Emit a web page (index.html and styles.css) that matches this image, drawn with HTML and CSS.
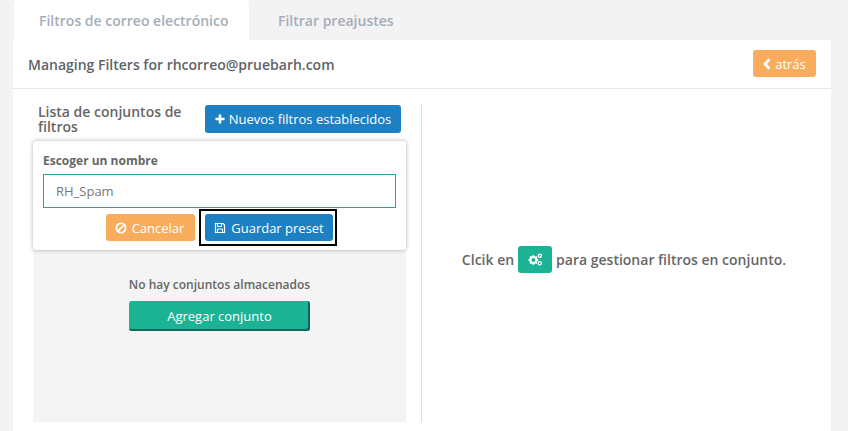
FILE: index.html
```html
<!DOCTYPE html>
<html lang="es">
<head>
<meta charset="utf-8">
<title>Filtros de correo electrónico</title>
<link rel="stylesheet" href="styles.css">
</head>
<body>
<nav class="tabs">
  <a class="tab tab-active">Filtros de correo electrónico</a>
  <a class="tab">Filtrar preajustes</a>
</nav>
<main class="panel">
  <header class="panel-head">
    <h1 class="panel-title">Managing Filters for rhcorreo@pruebarh.com</h1>
    <button class="btn btn-orange btn-back"><svg class="ico-chevron" viewBox="0 0 8 12"><path d="M6.500 1.200 2 6l4.500 4.800" fill="none" stroke="currentColor" stroke-width="2.800"/></svg>atrás</button>
  </header>
  <div class="columns">
    <section class="col-left">
      <div class="list-head">
        <h2 class="list-title">Lista de conjuntos de filtros</h2>
        <button class="btn btn-blue btn-new"><svg class="ico-plus" viewBox="0 0 11 11"><path d="M5.500 0.500v10M0.500 5.500h10" fill="none" stroke="currentColor" stroke-width="2.800"/></svg>Nuevos filtros establecidos</button>
      </div>
      <div class="well">
        <div class="popup">
          <label class="popup-label" for="name">Escoger un nombre</label>
          <input class="popup-input" id="name" type="text" value="RH_Spam">
          <div class="popup-actions">
            <button class="btn btn-orange btn-cancel"><svg class="ico-btn" viewBox="0 0 12 12"><circle cx="6" cy="6" r="4.600" fill="none" stroke="currentColor" stroke-width="1.800"/><path d="M2.800 9.200 9.200 2.800" stroke="currentColor" stroke-width="1.800"/></svg>Cancelar</button>
            <span class="focus-ring"><button class="btn btn-blue btn-save"><svg class="ico-btn" viewBox="0 0 12 12"><path d="M1.500 1.500h7.500l1.500 1.500v7.500h-9z" fill="none" stroke="currentColor" stroke-width="1.200"/><path d="M3.500 1.500h4v3h-4zM3.500 10.500v-3.500h5v3.500" fill="none" stroke="currentColor" stroke-width="1"/></svg>Guardar preset</button></span>
          </div>
        </div>
        <div class="empty">
          <p class="empty-text">No hay conjuntos almacenados</p>
          <button class="btn btn-add">Agregar conjunto</button>
        </div>
      </div>
    </section>
    <section class="col-right">
      <p class="hint">Clcik en <span class="gear-btn"><svg class="ico-gears" viewBox="0 0 14 12"><circle cx="5" cy="6.500" r="2.800" fill="none" stroke="currentColor" stroke-width="2"/><path d="M5 1.800v1.600M5 9.600v1.600M0.300 6.500h1.600M8.100 6.500h1.600M1.700 3.200l1.100 1.100M7.200 8.700l1.100 1.100M1.700 9.800l1.100-1.100M7.200 4.300l1.100-1.100" stroke="currentColor" stroke-width="1.300"/><circle cx="11" cy="2.600" r="1.500" fill="none" stroke="currentColor" stroke-width="1.200"/><circle cx="11" cy="9.400" r="1.500" fill="none" stroke="currentColor" stroke-width="1.200"/></svg></span> para gestionar filtros en conjunto.</p>
    </section>
  </div>
</main>
</body>
</html>
```

FILE: styles.css
```css
* { box-sizing: border-box; }
html, body { margin: 0; height: 431px; overflow: hidden; }
body {
  background: #f3f3f3;
  padding: 0 17px 0 13px;
  font-family: "Open Sans", sans-serif;
  font-size: 13px;
  color: #666;
}
.tabs { display: flex; height: 40px; padding-left: 1px; }
.tab {
  display: flex;
  align-items: center;
  padding: 0 25px 0 25px;
  font-size: 14px;
  font-weight: 600;
  color: #a5adba;
  border-radius: 4px 4px 0 0;
}
.tab-active { background: #fff; width: 235px; justify-content: flex-start; padding: 0 0 0 25px; }
.tab + .tab { padding-left: 29px; }
.panel { background: #fff; height: 391px; }
.panel-head {
  height: 49px;
  display: flex;
  align-items: center;
  justify-content: space-between;
  padding: 0 15px;
  border-bottom: 1px solid #e8e8e8;
}
.panel-title { margin: 0; font-size: 14px; font-weight: 600; color: #5f6368; }
.btn {
  display: inline-flex;
  align-items: center;
  justify-content: center;
  border: 0;
  border-radius: 3px;
  color: #fff;
  font-family: inherit;
  font-size: 13px;
  padding: 0;
}
.btn-orange { background: #f9ad5c; color: #fff; }
.btn-blue { background: #1d80c3; }
.btn-back { width: 63px; height: 27px; margin-top: -1px; }
.ico-chevron { width: 8px; height: 12px; margin-right: 4px; }
.columns { display: flex; padding: 15px 0 0 20px; height: 333px; }
.col-left { width: 373px; }
.list-head {
  height: 38px;
  display: flex;
  align-items: flex-start;
  padding-left: 5px;
}
.list-title {
  margin: 0;
  width: 167px;
  font-size: 14px;
  font-weight: 600;
  line-height: 15px;
  color: #666;
}
.btn-new { width: 196px; height: 28px; margin-top: 1px; }
.ico-plus { width: 10px; height: 10px; margin-right: 4px; }
.well { background: #f4f4f4; height: 281px; margin-top: -1px; }
.popup {
  background: #fff;
  height: 109px;
  border-radius: 3px;
  box-shadow: 0 0 4px rgba(60, 60, 70, .4);
  padding: 12px 10px 0;
}
.popup-label { display: block; font-size: 12px; font-weight: 700; line-height: 16px; color: #666; }
.popup-input {
  display: block;
  width: 100%;
  height: 34px;
  margin-top: 5px;
  border: 1px solid #2fa39a;
  padding: 0 12px;
  font-family: inherit;
  font-size: 13px;
  color: #777;
  outline: 0;
}
.popup-actions { display: flex; justify-content: center; align-items: center; margin-top: 1px; }
.btn-cancel { width: 89px; height: 27px; margin: 0 4px; padding-right: 2px; }
.focus-ring { display: flex; padding: 3px 2px 3px 4px; border: 2px solid #000; }
.btn-save { width: 128px; height: 27px; }
.ico-btn { width: 12px; height: 12px; margin-right: 5px; }
.empty { display: flex; flex-direction: column; align-items: center; padding-top: 26px; }
.empty-text { margin: 0; font-size: 12px; font-weight: 600; line-height: 17px; color: #666; }
.btn-add {
  width: 181px;
  height: 30px;
  margin-top: 8px;
  background: #1cb394;
  box-shadow: inset -2px -2px 0 #0b6b58;
}
.col-right {
  width: 410px;
  margin-left: 15px;
  border-left: 1px solid #ddd;
  display: flex;
  align-items: center;
  justify-content: center;
  height: 318px;
  padding: 0 5px 8px 0;
}
.hint { margin: 0; font-size: 14px; font-weight: 600; color: #666; display: flex; align-items: center; gap: 4px; }
.gear-btn {
  display: inline-flex;
  align-items: center;
  justify-content: center;
  width: 34px;
  height: 27px;
  border-radius: 3px;
  background: #1cb394;
  color: #fff;
}
.ico-gears { width: 15px; height: 13px; }
```
